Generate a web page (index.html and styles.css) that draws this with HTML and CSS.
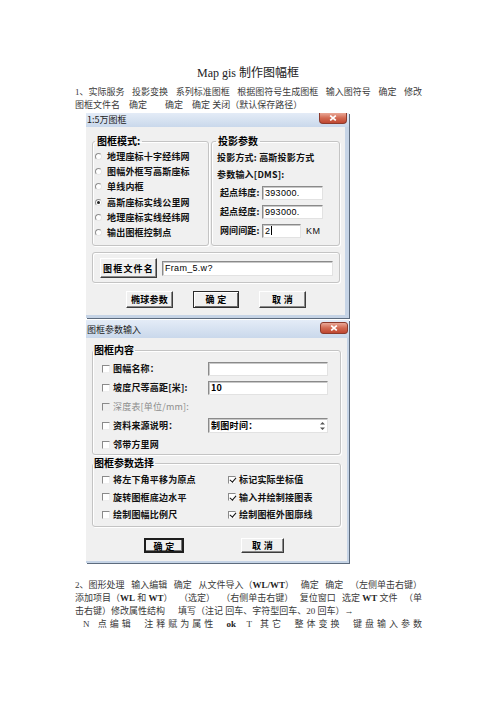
FILE: index.html
```html
<!DOCTYPE html>
<html lang="zh-CN">
<head>
<meta charset="utf-8">
<title>Map gis 制作图幅框</title>
<link rel="stylesheet" href="styles.css">
</head>
<body>
<main class="page">
  <h1 class="doc-title">Map gis 制作图幅框</h1>

  <p class="para para-1">
    <span class="ln ln-just"><span>1、实际服务</span><span>投影变换</span><span>系列标准图框</span><span>根据图符号生成图框</span><span>输入图符号</span><span>确定</span><span>修改</span></span>
    <span class="ln">图框文件名　确定　　确定　确定 关闭（默认保存路径）</span>
  </p>

  <section class="win win-map">
    <header class="titlebar">
      <span class="caption">1:5万图框</span>
      <span class="close"><svg width="8" height="6" viewBox="0 0 8 6"><path d="M1.2 0.6 L6.8 5.4 M6.8 0.6 L1.2 5.4"/></svg></span>
    </header>
    <div class="client">
      <div class="grp-row">
        <fieldset class="grp grp-mode">
          <legend>图框模式:</legend>
          <div class="opt"><span class="radio"></span>地理座标十字经纬网</div>
          <div class="opt"><span class="radio"></span>图幅外框写高斯座标</div>
          <div class="opt"><span class="radio"></span>单线内框</div>
          <div class="opt"><span class="radio on"></span>高斯座标实线公里网</div>
          <div class="opt"><span class="radio"></span>地理座标实线经纬网</div>
          <div class="opt"><span class="radio"></span>输出图框控制点</div>
        </fieldset>
        <fieldset class="grp grp-proj">
          <legend>投影参数</legend>
          <div class="line">投影方式: 高斯投影方式</div>
          <div class="line">参数输入[DMS]:</div>
          <div class="field"><span class="fl">起点纬度:</span><span class="edit edit-long">393000.</span></div>
          <div class="field"><span class="fl">起点经度:</span><span class="edit edit-long">993000.</span></div>
          <div class="field"><span class="fl">网间间距:</span><span class="edit edit-short">2<i class="caret"></i></span><span class="unit">KM</span></div>
        </fieldset>
      </div>
      <fieldset class="grp grp-file">
        <button class="btn btn-file" type="button">图框文件名</button>
        <span class="edit edit-file">Fram_5.w?</span>
      </fieldset>
      <div class="btn-row btn-row-map">
        <button class="btn" type="button">椭球参数</button>
        <button class="btn btn-default" type="button">确 定</button>
        <button class="btn" type="button">取 消</button>
      </div>
    </div>
  </section>

  <section class="win win-params">
    <header class="titlebar">
      <span class="caption">图框参数输入</span>
      <span class="close"><svg width="8" height="6" viewBox="0 0 8 6"><path d="M1.2 0.6 L6.8 5.4 M6.8 0.6 L1.2 5.4"/></svg></span>
    </header>
    <div class="client">
      <fieldset class="grp grp-content">
        <legend>图框内容</legend>
        <div class="crow"><span class="chk"></span><span class="cl">图幅名称：</span><span class="edit edit-wide"></span></div>
        <div class="crow"><span class="chk"></span><span class="cl">坡度尺等高距[米]:</span><span class="edit edit-wide">10</span></div>
        <div class="crow crow-off"><span class="chk"></span><span class="cl">深度表[单位/mm]:</span></div>
        <div class="crow"><span class="chk"></span><span class="cl">资料来源说明：</span><span class="edit edit-wide edit-memo"><span>制图时间：</span><svg class="spin" width="7" height="12" viewBox="0 0 7 12"><path d="M3.5 2 L6 4.5 L1 4.5 Z M1 7.5 L6 7.5 L3.5 10 Z"/></svg></span></div>
        <div class="crow"><span class="chk"></span><span class="cl">邻带方里网</span></div>
      </fieldset>
      <fieldset class="grp grp-opts">
        <legend>图框参数选择</legend>
        <div class="opts-grid">
          <div class="crow"><span class="chk"></span>将左下角平移为原点</div>
          <div class="crow"><span class="chk on"></span>标记实际坐标值</div>
          <div class="crow"><span class="chk"></span>旋转图框底边水平</div>
          <div class="crow"><span class="chk on"></span>输入并绘制接图表</div>
          <div class="crow"><span class="chk"></span>绘制图幅比例尺</div>
          <div class="crow"><span class="chk on"></span>绘制图框外图廓线</div>
        </div>
      </fieldset>
      <div class="btn-row btn-row-params">
        <button class="btn btn-default btn-ok" type="button">确 定</button>
        <button class="btn btn-cancel" type="button">取 消</button>
      </div>
    </div>
  </section>

  <p class="para para-2">
    <span class="ln ln-just"><span>2、图形处理</span><span>输入编辑</span><span>确定</span><span>从文件导入（<b>WL/WT</b>）</span><span>确定</span><span>确定</span><span>（左侧单击右键）</span></span>
    <span class="ln ln-just"><span>添加项目（<b>WL</b> 和 <b>WT</b>）</span><span>（选定）</span><span>（右侧单击右键）</span><span>复位窗口</span><span>选定 <b>WT</b> 文件</span><span>（单</span></span>
    <span class="ln">击右键）修改属性结构<span class="gap"></span>填写（注记 回车、字符型回车、20 回车）→</span>
    <span class="ln ln-just ln-spread"><span>N 点编辑</span><span>注释赋为属性</span><b class="tight">ok</b><span>T 其它</span><span>整体变换</span><span>键盘输入参数</span></span>
  </p>
</main>
</body>
</html>
```

FILE: styles.css
```css
* {
  box-sizing: border-box;
}

html,
body {
  margin: 0;
  background: #fff;
}

/* ---------- document text ---------- */

.page {
  width: 496px;
  padding-top: 65px;
  font-family: "Liberation Serif", "Noto Sans CJK SC", serif;
  color: #3a3a3a;
}

.doc-title {
  margin: 0;
  font-size: 12px;
  line-height: 16px;
  font-weight: normal;
  text-align: center;
  color: #222;
}

.para {
  margin: 0 74px 0 75px;
  font-size: 9px;
  line-height: 13px;
}

.para b {
  font-weight: bold;
  color: #222;
}

.para-1 {
  margin-top: 5px;
}

.para-2 {
  margin-top: 16px;
}

.ln {
  display: block;
  white-space: nowrap;
}

.ln-just {
  display: flex;
  justify-content: space-between;
}

.ln-spread {
  padding-left: 8px;
  margin-right: -3px;
  letter-spacing: 3px;
}

.ln-spread .tight {
  letter-spacing: 0;
}

.gap {
  display: inline-block;
  width: 13px;
}

/* ---------- dialog windows ---------- */

.win {
  width: 263px;
  margin-left: 86px;
  background: #f0f0f0;
  font-family: "Noto Sans CJK SC", "Liberation Sans", sans-serif;
  font-size: 9px;
  color: #111;
  box-shadow: 1px 1px 0 #5d6b7d;
}

.win-map {
  margin-top: 1px;
  border-bottom: 3px solid #c6d4e6;
}

.win-params {
  margin-top: 2px;
  border-bottom: 2px solid #c6d4e6;
}

.titlebar {
  display: flex;
  justify-content: space-between;
  align-items: flex-start;
  background: linear-gradient(#e4ecf7, #c9d8eb);
}

.win-map .titlebar {
  height: 14px;
}

.win-params .titlebar {
  height: 18px;
}

.caption {
  padding-left: 1px;
  line-height: 14px;
  font-size: 9px;
  color: #1b1b1b;
}

.win-params .caption {
  line-height: 20px;
}

.close {
  display: flex;
  align-items: center;
  justify-content: center;
  width: 28px;
  height: 11px;
  margin-right: 2px;
  background: linear-gradient(#eaa897, #d26a52 50%, #bf4731);
  border: 1px solid #8c3a2c;
  border-top: 0;
  border-radius: 0 0 4px 4px;
}

.win-params .close {
  height: 12px;
  margin-top: 2px;
  margin-right: 1px;
  border-top: 1px solid #8c3a2c;
  border-radius: 3px;
}

.close svg {
  stroke: #fff;
  stroke-width: 1.7;
  fill: none;
}

.client {
  display: flex;
  flex-direction: column;
}

.win-map .client {
  padding: 8px 5px 7px 6px;
  border-right: 4px solid #c6d4e6;
}

.win-params .client {
  padding: 6px 6px 8px 6px;
  border-right: 2px solid #c6d4e6;
}

/* group boxes */

.grp {
  margin: 0;
  min-width: 0;
  border: 1px solid #c4c4c4;
  border-radius: 3px;
  box-shadow: 1px 1px 0 #fff, inset 1px 1px 0 #fff;
}

.grp legend {
  padding: 0 2px;
  font-size: 10px;
  line-height: 12px;
  font-weight: 700;
  color: #000;
}

.grp-row {
  display: flex;
  gap: 2px;
}

.grp-mode {
  width: 117px;
  padding: 2px 2px 5px 2px;
}

.grp-proj {
  flex: 1;
  padding: 2px 4px 4px 4px;
}

.opt {
  display: flex;
  align-items: center;
  height: 15.2px;
  font-weight: 700;
  letter-spacing: 0.2px;
  white-space: nowrap;
}

.radio {
  position: relative;
  flex: none;
  width: 7px;
  height: 7px;
  margin-right: 5px;
  border: 1px solid;
  border-color: #8f8f8f #e6e6e6 #e6e6e6 #8f8f8f;
  border-radius: 50%;
  background: #fff;
}

.radio.on::after {
  content: "";
  position: absolute;
  left: 1px;
  top: 1px;
  width: 3px;
  height: 3px;
  border-radius: 50%;
  background: #222;
}

.line {
  display: flex;
  align-items: center;
  height: 17px;
  padding-left: 1px;
  font-weight: 700;
  letter-spacing: 0.2px;
  white-space: nowrap;
}

.field {
  display: flex;
  align-items: center;
  height: 19px;
  padding-left: 4px;
  font-weight: 700;
  white-space: nowrap;
}

.fl {
  width: 42px;
  letter-spacing: 0.1px;
}

.edit {
  display: flex;
  align-items: center;
  height: 14px;
  padding-left: 2px;
  background: #fff;
  border: 1px solid;
  border-color: #8a8a8a #e2e2e2 #e2e2e2 #8a8a8a;
  box-shadow: inset 1px 1px 0 #c8c8c8;
  font-family: "Liberation Sans", "Noto Sans CJK SC", sans-serif;
  font-size: 9px;
  font-weight: 400;
  color: #000;
  letter-spacing: 0.3px;
  white-space: nowrap;
}

.edit-long {
  width: 61px;
}

.edit-short {
  width: 39px;
}

.caret {
  display: inline-block;
  width: 1px;
  height: 9px;
  margin-left: 1px;
  background: #000;
}

.unit {
  margin-left: 5px;
  font-family: "Liberation Sans", sans-serif;
  font-weight: 400;
  letter-spacing: 0.6px;
}

.grp-file {
  display: flex;
  align-items: center;
  margin-top: 6px;
  padding: 5px 6px 4px 7px;
}

.edit-file {
  flex: 1;
  height: 15px;
  margin-left: 5px;
}

/* buttons */

.btn {
  height: 17px;
  padding: 0;
  background: #f0f0f0;
  border: 1px solid;
  border-color: #fff #3c3c3c #3c3c3c #fff;
  box-shadow: inset -1px -1px 0 #8a8a8a;
  font-family: "Noto Sans CJK SC", sans-serif;
  font-size: 9px;
  font-weight: 700;
  letter-spacing: 0.3px;
  color: #000;
  white-space: nowrap;
}

.btn-default {
  border-color: #2b2b2b;
  box-shadow: inset 1px 1px 0 #fff, inset -1px -1px 0 #6a6a6a;
}

.btn-file {
  width: 57px;
  height: 20px;
  letter-spacing: 1.2px;
}

.btn-row {
  display: flex;
  justify-content: center;
}

.btn-row-map {
  gap: 20px;
  margin-top: 8px;
}

.btn-row-map .btn {
  width: 47px;
}

.btn-row-map .btn-default {
  width: 46px;
}

.btn-row-params {
  gap: 57px;
  margin-top: 11px;
  padding-right: 5px;
}

.btn-row-params .btn {
  height: 15px;
}

.btn-ok {
  width: 40px;
  border-width: 2px;
  border-color: #1e1e1e;
  box-shadow: inset -1px -1px 0 #777;
}

.btn-cancel {
  width: 43px;
}

/* checkbox rows */

.grp-content {
  padding: 3px 0 0 0;
}

.grp-content legend,
.grp-opts legend {
  margin-left: 0;
  padding: 0 1px;
}

.crow {
  display: flex;
  align-items: center;
  height: 19px;
  padding-left: 9px;
  font-weight: 700;
  letter-spacing: 0.2px;
  white-space: nowrap;
}

.chk {
  position: relative;
  flex: none;
  width: 8px;
  height: 8px;
  margin-right: 3px;
  background: #fff;
  border: 1px solid;
  border-color: #8a8a8a #eeeeee #eeeeee #8a8a8a;
}

.chk.on::after {
  content: "";
  position: absolute;
  left: 1.5px;
  top: -0.5px;
  width: 2.5px;
  height: 5px;
  border: solid #111;
  border-width: 0 1.5px 1.5px 0;
  transform: rotate(40deg);
}

.cl {
  width: 95px;
}

.crow-off {
  color: #8d8d8d;
  font-weight: 400;
}

.crow-off .chk {
  background: #f0f0f0;
}

.edit-wide {
  width: 120px;
  font-family: "Noto Sans CJK SC", sans-serif;
  font-weight: 700;
}

.edit-memo {
  justify-content: space-between;
  height: 15px;
  padding-right: 1px;
}

.spin {
  fill: #555;
}

.grp-opts {
  margin-top: 2px;
  padding: 2px 0 2px 0;
}

.opts-grid {
  display: grid;
  grid-template-columns: 126px 1fr;
}

.opts-grid .crow {
  height: 17.5px;
}
```
